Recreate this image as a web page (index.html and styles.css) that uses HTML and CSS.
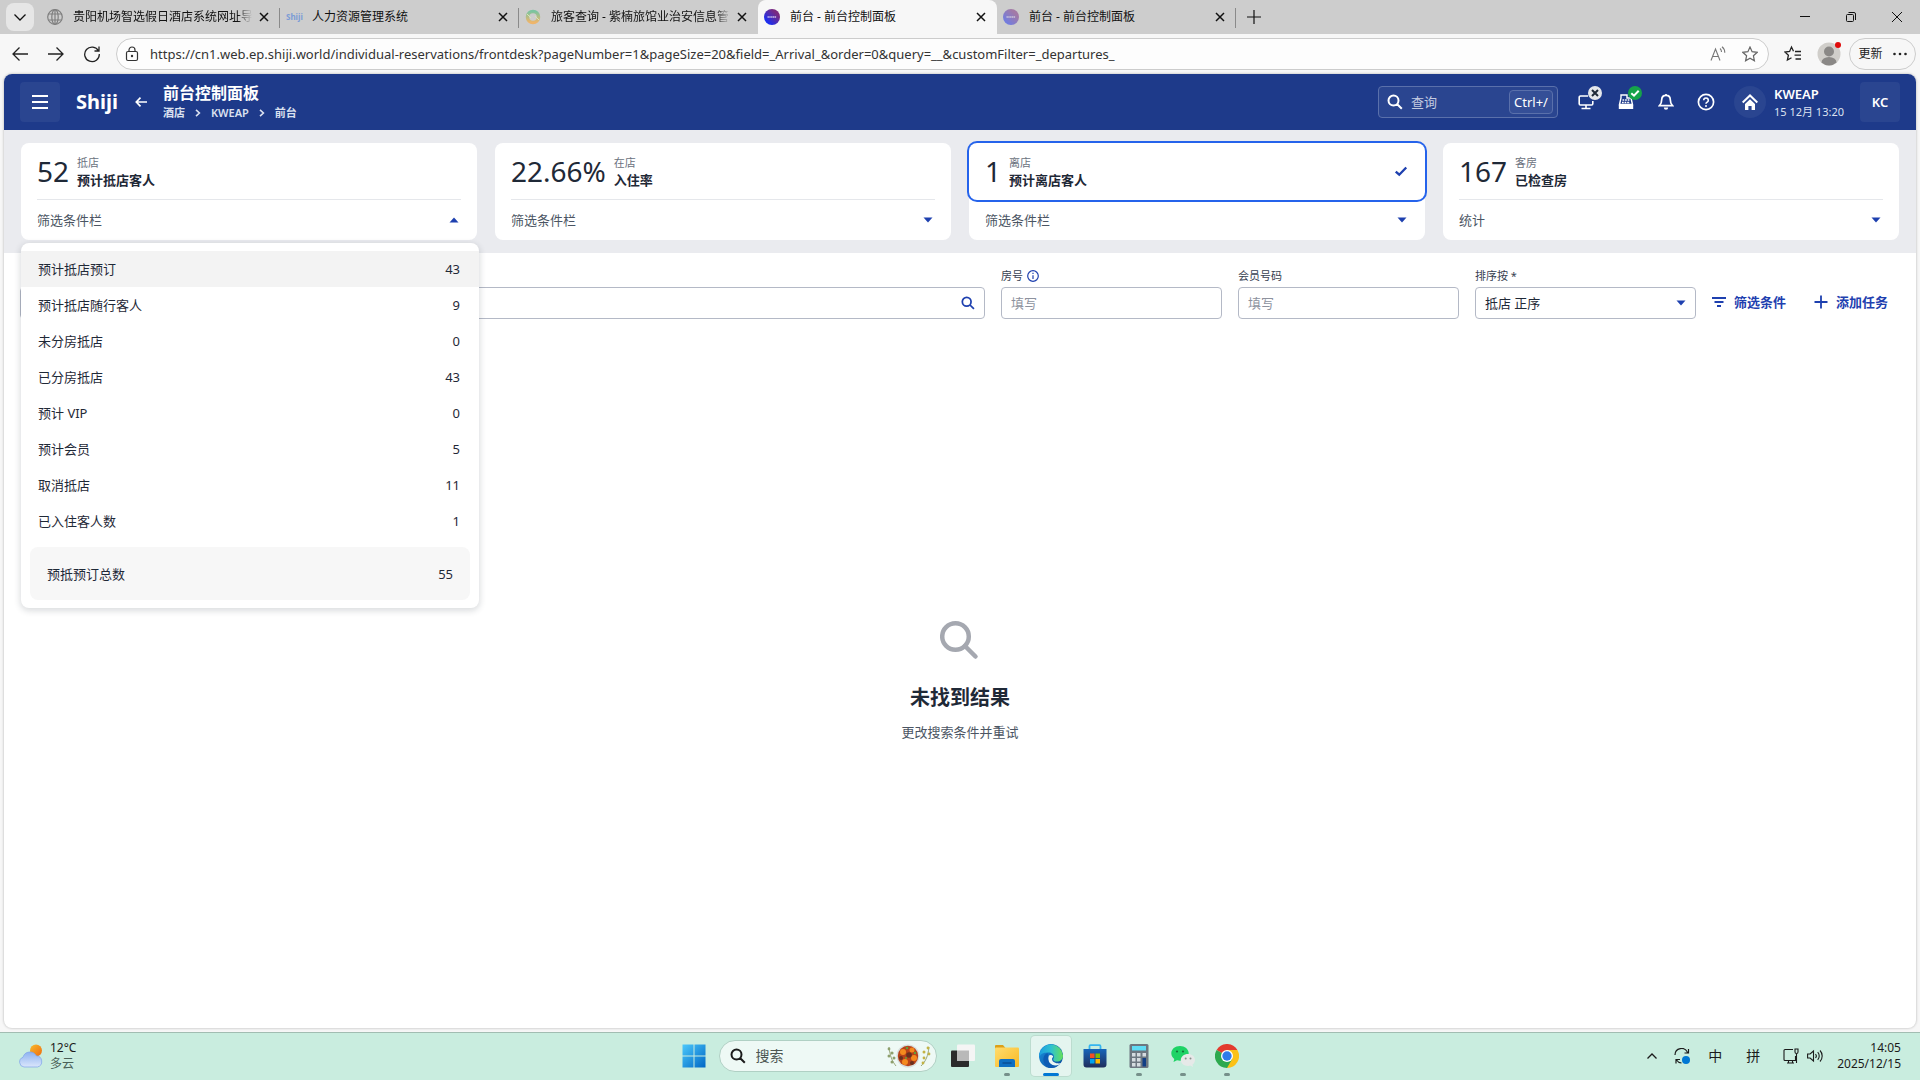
FILE: index.html
```html
<!DOCTYPE html>
<html lang="zh-CN">
<head>
<meta charset="utf-8">
<meta name="viewport" content="width=device-width, initial-scale=1">
<title>前台 - 前台控制面板</title>
<link rel="stylesheet" href="styles.css">
</head>
<body>
<svg class="defs" aria-hidden="true">
  <defs>
    <symbol id="i-x" viewBox="0 0 16 16"><path d="M4 4l8 8M12 4l-8 8" fill="none" stroke="currentColor" stroke-width="1.5"/></symbol>
    <symbol id="i-search" viewBox="0 0 16 16"><path d="M6.5 1.5a5 5 0 1 0 0 10 5 5 0 0 0 0-10zM10 10l4.8 4.8" fill="none" stroke="currentColor" stroke-width="2"/></symbol>
    <symbol id="i-down" viewBox="0 0 10 6"><path d="M0.5 0.5h9L5 5.5z" fill="currentColor"/></symbol>
    <symbol id="i-up" viewBox="0 0 10 6"><path d="M0.5 5.5h9L5 0.5z" fill="currentColor"/></symbol>
    <symbol id="i-sep" viewBox="0 0 6 8"><path d="M1 .8L4.4 4 1 7.2" fill="none" stroke="currentColor" stroke-width="1.6"/></symbol>
    <symbol id="i-shiji" viewBox="0 0 16 16"><circle cx="8" cy="8" r="8" fill="url(#g-shiji)"/><path d="M3.5 8h9" stroke="#fff" stroke-opacity=".7" stroke-width="1.6" stroke-dasharray="1.4 .4"/></symbol>
    <linearGradient id="g-shiji" x1="1" y1="0" x2="0" y2="1"><stop offset=".25" stop-color="#7a2a80"/><stop offset=".8" stop-color="#1b2ef0"/></linearGradient>
    <linearGradient id="g-win" x1="0" y1="0" x2="1" y2="1"><stop offset="0" stop-color="#4cc8fb"/><stop offset="1" stop-color="#0067c5"/></linearGradient>
    <linearGradient id="g-ring" x1="0" y1="0" x2="0" y2="1"><stop offset="0" stop-color="#7cc4a0"/><stop offset="1" stop-color="#efb56a"/></linearGradient>
    <linearGradient id="g-cloud" x1="0" y1="0" x2="0" y2="1"><stop offset="0" stop-color="#8db2f1"/><stop offset="1" stop-color="#dbe6fb"/></linearGradient>
    <linearGradient id="g-sun" x1="0" y1="0" x2="1" y2="1"><stop offset="0" stop-color="#f8bb2c"/><stop offset="1" stop-color="#ee6a10"/></linearGradient>
    <linearGradient id="g-edge-top" x1="0" y1="0" x2="1" y2="0"><stop offset="0" stop-color="#1c9de0"/><stop offset=".5" stop-color="#2fc2cf"/><stop offset="1" stop-color="#66e05a"/></linearGradient>
    <linearGradient id="g-edge" x1="0" y1="0" x2="1" y2="1"><stop offset="0" stop-color="#1a93e0"/><stop offset="1" stop-color="#0a4a9c"/></linearGradient>
    <linearGradient id="g-folder" x1="0" y1="0" x2="1" y2="1"><stop offset="0" stop-color="#ffdc6e"/><stop offset="1" stop-color="#f9b923"/></linearGradient>
    <linearGradient id="g-store" x1="0" y1="0" x2="0" y2="1"><stop offset="0" stop-color="#1766ba"/><stop offset="1" stop-color="#1f2e5c"/></linearGradient>
  </defs>
</svg>

<div class="tabstrip">
  <button class="tab-menu" aria-label="标签页操作"><svg class="s14" viewBox="0 0 14 14"><path d="M1.5 4.5L7 10l5.500-5.500" fill="none" stroke="currentColor" stroke-width="1.3"/></svg></button>
  <div class="tabs">
    <div class="tab">
      <svg class="s16 dim" viewBox="0 0 16 16"><g fill="none" stroke="#333" stroke-width="1.200"><circle cx="8" cy="8" r="7.300"/><ellipse cx="8" cy="8" rx="3.200" ry="7.300"/><path d="M8 .7v14.600M1.500 5h13M1.500 11h13"/></g></svg>
      <button class="tab-title tab-fade">贵阳机场智选假日酒店系统网址导航</button>
      <button class="tab-close" aria-label="关闭"><svg class="s16"><use href="#i-x"/></svg></button>
    </div>
    <div class="tab">
      <span class="tab-word">Shiji</span>
      <button class="tab-title">人力资源管理系统</button>
      <button class="tab-close" aria-label="关闭"><svg class="s16"><use href="#i-x"/></svg></button>
    </div>
    <div class="tab">
      <svg class="s16" viewBox="0 0 16 16"><circle cx="8" cy="8" r="5.500" fill="none" stroke="url(#g-ring)" stroke-width="3.500"/><path d="M2 5l4 4M14 11l-4-4" stroke="#d9e6b8" stroke-width="1"/></svg>
      <button class="tab-title tab-fade">旅客查询 - 紫楠旅馆业治安信息管理</button>
      <button class="tab-close" aria-label="关闭"><svg class="s16"><use href="#i-x"/></svg></button>
    </div>
    <div class="tab tab-active">
      <svg class="s16"><use href="#i-shiji"/></svg>
      <button class="tab-title">前台 - 前台控制面板</button>
      <button class="tab-close" aria-label="关闭"><svg class="s16"><use href="#i-x"/></svg></button>
    </div>
    <div class="tab">
      <svg class="s16 dim"><use href="#i-shiji"/></svg>
      <button class="tab-title">前台 - 前台控制面板</button>
      <button class="tab-close" aria-label="关闭"><svg class="s16"><use href="#i-x"/></svg></button>
    </div>
  </div>
  <button class="tab-new" aria-label="新建标签页"><svg class="s14" viewBox="0 0 14 14"><path d="M7 0v14M0 7h14" stroke="currentColor" stroke-width="1.200"/></svg></button>
  <div class="window-controls">
    <button aria-label="最小化"><svg class="s12" viewBox="0 0 12 12"><path d="M1 5.500h10" stroke="currentColor"/></svg></button>
    <button aria-label="还原"><svg class="s12" viewBox="0 0 12 12"><g fill="none" stroke="currentColor"><rect x="1.500" y="3.500" width="7" height="7" rx="1"/><path d="M3.500 1.500h5.500a1.500 1.500 0 0 1 1.500 1.500v6"/></g></svg></button>
    <button aria-label="关闭窗口"><svg class="s12" viewBox="0 0 12 12"><path d="M1 1l10 10M11 1L1 11" stroke="currentColor"/></svg></button>
  </div>
</div>

<div class="toolbar">
  <button aria-label="后退"><svg class="s18" viewBox="0 0 18 18"><path d="M17 9H2M8.500 2.500L2 9l6.500 6.500" fill="none" stroke="currentColor" stroke-width="1.300"/></svg></button>
  <button aria-label="前进"><svg class="s18" viewBox="0 0 18 18"><path d="M1 9h15M9.500 2.500L16 9l-6.500 6.500" fill="none" stroke="currentColor" stroke-width="1.300"/></svg></button>
  <button aria-label="刷新"><svg class="s18" viewBox="0 0 18 18"><path d="M15.500 6A7.300 7.300 0 1 0 16.300 9M16 1.500V6h-4.500" fill="none" stroke="currentColor" stroke-width="1.300"/></svg></button>
  <div class="address">
    <svg class="s16" viewBox="0 0 16 16"><g fill="none" stroke="#333" stroke-width="1.200"><rect x="2.500" y="5.500" width="11" height="9" rx="1.500"/><path d="M5 5.500V4a3 3 0 0 1 6 0v1.500"/></g><circle cx="8" cy="10" r="1.200" fill="#333"/></svg>
    <input class="url" type="text" aria-label="地址" value="https://cn1.web.ep.shiji.world/individual-reservations/frontdesk?pageNumber=1&amp;pageSize=20&amp;field=_Arrival_&amp;order=0&amp;query=__&amp;customFilter=_departures_">
    <button aria-label="朗读"><svg class="s16" viewBox="0 0 16 16"><g fill="none" stroke="#777" stroke-width="1.100"><path d="M1 14.500L5.500 3 10 14.500M2.600 10.500h5.800M10 2.500c1 .8 1.500 2 1.500 3.500M12 .8c1.800 1.400 2.800 3.400 2.800 6"/></g></svg></button>
    <button aria-label="收藏此页"><svg class="s16" viewBox="0 0 16 16"><path d="M8 1l2.100 4.700 5.100.6-3.800 3.400 1 5.100L8 12.200l-4.400 2.600 1-5.100L.8 6.300l5.100-.6z" fill="none" stroke="#666" stroke-width="1.200"/></svg></button>
  </div>
  <button class="tool" aria-label="收藏夹"><svg class="s18" viewBox="0 0 18 18"><path d="M9.500 6.200L7.500 2 5.600 6.400.9 7l3.500 3.200-1 4.800 4.100-2.300M11 6.500h6M10.500 10.200H17M11.500 14H17" fill="none" stroke="#222" stroke-width="1.300"/></svg></button>
  <button class="avatar" aria-label="个人资料"><svg class="s24" viewBox="0 0 24 24"><circle cx="12" cy="12" r="11.500" fill="#d0ceca"/><circle cx="12" cy="9.500" r="5" fill="#8a8886"/><path d="M4.500 20.500a7.500 5.500 0 0 1 15 0A11.500 11.500 0 0 1 12 23.500a11.500 11.500 0 0 1-7.500-3z" fill="#8a8886"/></svg><span class="avatar-dot"></span></button>
  <button class="update">更新<svg class="s14" viewBox="0 0 14 14"><g fill="currentColor"><circle cx="1.500" cy="7" r="1.300"/><circle cx="7" cy="7" r="1.300"/><circle cx="12.500" cy="7" r="1.300"/></g></svg></button>
</div>

<div class="viewport">
<div class="app">
  <header class="app-header">
    <button class="square" aria-label="菜单"><svg class="s16" viewBox="0 0 16 16"><path d="M0 2h16M0 8h16M0 14h16" stroke="currentColor" stroke-width="2"/></svg></button>
    <a class="logo" href="#">Shiji</a>
    <button class="back" aria-label="返回"><svg class="s12" viewBox="0 0 12 12"><path d="M12 6H1.500M5.500 1.700L1.300 6l4.200 4.300" fill="none" stroke="currentColor" stroke-width="1.700"/></svg></button>
    <div class="heading">
      <h1>前台控制面板</h1>
      <nav class="crumbs"><a href="#">酒店</a><svg class="sep"><use href="#i-sep"/></svg><a href="#">KWEAP</a><svg class="sep"><use href="#i-sep"/></svg><a href="#">前台</a></nav>
    </div>
    <label class="quick"><svg class="s16"><use href="#i-search"/></svg><input type="text" aria-label="查询" placeholder="查询"><kbd>Ctrl+/</kbd></label>
    <div class="header-icons">
      <button aria-label="终端"><svg class="s16" viewBox="0 0 16 16"><g fill="none" stroke="currentColor" stroke-width="1.600"><path d="M10 2H2.500A1.300 1.300 0 0 0 1.200 3.300v6.400A1.300 1.300 0 0 0 2.500 11h11a1.300 1.300 0 0 0 1.300-1.300V7M8 11v3.500M3.500 14.500h9"/></g></svg><span class="badge badge-off"><svg class="s12" viewBox="0 0 12 12"><path d="M3 3l6 6M9 3L3 9" stroke="currentColor" stroke-width="2"/></svg></span></button>
      <button aria-label="收银"><svg class="s16" viewBox="0 0 16 16"><path d="M3 1h6v3h4l1.500 6.500H1.500L3 4z" fill="none" stroke="currentColor" stroke-width="1.400"/><path d="M4.500 6h7M4 8.500h8" stroke="currentColor" stroke-width="1.300" stroke-dasharray="1.700 .9"/><path d="M.8 11h14.400v4H.8z" fill="currentColor"/></svg><span class="badge badge-on"><svg class="s12" viewBox="0 0 12 12"><path d="M2.300 6.200L5 8.700l4.700-5" fill="none" stroke="currentColor" stroke-width="2"/></svg></span></button>
      <button aria-label="通知"><svg class="s16" viewBox="0 0 16 16"><path d="M8 1.300c-2.800 0-4.300 2-4.300 4.500 0 3.200-.9 4.600-2.200 5.900h13c-1.300-1.300-2.200-2.700-2.200-5.900C12.300 3.300 10.800 1.300 8 1.300zM8 0v1.500" fill="none" stroke="currentColor" stroke-width="1.700"/><path d="M5.800 13.500h4.400a2.200 2.200 0 0 1-4.400 0z" fill="currentColor"/></svg></button>
      <button aria-label="帮助"><svg class="s18" viewBox="0 0 18 18"><circle cx="9" cy="9" r="7.600" fill="none" stroke="currentColor" stroke-width="1.700"/><path d="M6.700 7.200a2.300 2.200 0 1 1 3.500 1.900c-.8.500-1.200.8-1.200 1.700" fill="none" stroke="currentColor" stroke-width="1.600"/><circle cx="9" cy="13" r="1" fill="currentColor"/></svg></button>
    </div>
    <div class="property">
      <span class="home"><svg class="s16" viewBox="0 0 16 16"><path d="M.7 8.500L8 1.500l7.300 7" fill="none" stroke="currentColor" stroke-width="2"/><path d="M3 10l5-4.700 5 4.700v6H9.600v-4H6.400v4H3z" fill="currentColor"/></svg></span>
      <div class="property-text"><strong>KWEAP</strong><span>15 12月 13:20</span></div>
    </div>
    <button class="square user">KC</button>
  </header>

  <section class="summary">
    <article class="card">
      <button class="card-head"><span class="figure">52</span><span class="card-text"><small>抵店</small><b>预计抵店客人</b></span></button>
      <button class="card-foot" aria-expanded="true">筛选条件栏<svg class="caret"><use href="#i-up"/></svg></button>
      <div class="panel">
        <ul class="options">
          <li><button class="option option-hover">预计抵店预订<span>43</span></button></li>
          <li><button class="option">预计抵店随行客人<span>9</span></button></li>
          <li><button class="option">未分房抵店<span>0</span></button></li>
          <li><button class="option">已分房抵店<span>43</span></button></li>
          <li><button class="option">预计 VIP<span>0</span></button></li>
          <li><button class="option">预计会员<span>5</span></button></li>
          <li><button class="option">取消抵店<span>11</span></button></li>
          <li><button class="option">已入住客人数<span>1</span></button></li>
        </ul>
        <div class="total">预抵预订总数<span>55</span></div>
      </div>
    </article>
    <article class="card">
      <button class="card-head"><span class="figure">22.66%</span><span class="card-text"><small>在店</small><b>入住率</b></span></button>
      <button class="card-foot">筛选条件栏<svg class="caret"><use href="#i-down"/></svg></button>
    </article>
    <article class="card">
      <button class="card-head card-selected"><span class="figure">1</span><span class="card-text"><small>离店</small><b>预计离店客人</b></span><svg class="check" viewBox="0 0 12 12"><path d="M1.500 6.500L4.500 9.200 10.500 3" fill="none" stroke="currentColor" stroke-width="2"/></svg></button>
      <button class="card-foot">筛选条件栏<svg class="caret"><use href="#i-down"/></svg></button>
    </article>
    <article class="card">
      <button class="card-head"><span class="figure">167</span><span class="card-text"><small>客房</small><b>已检查房</b></span></button>
      <button class="card-foot">统计<svg class="caret"><use href="#i-down"/></svg></button>
    </article>
  </section>

  <form class="filters">
    <div class="field field-wide"><div class="control"><input type="text" aria-label="搜索"><svg class="s14"><use href="#i-search"/></svg></div></div>
    <div class="field"><label for="f-room">房号 <svg class="s12" viewBox="0 0 12 12"><circle cx="6" cy="6" r="5.300" fill="none" stroke="#1e40af" stroke-width="1.200"/><path d="M6 5.200V9M6 2.800v1.300" stroke="#1e40af" stroke-width="1.200"/></svg></label><div class="control"><input id="f-room" type="text" placeholder="填写"></div></div>
    <div class="field"><label for="f-member">会员号码</label><div class="control"><input id="f-member" type="text" placeholder="填写"></div></div>
    <div class="field"><label for="f-sort">排序按 *</label><div class="control"><select id="f-sort"><option>抵店 正序</option></select><svg class="caret"><use href="#i-down"/></svg></div></div>
    <div class="actions">
      <button type="button"><svg class="s14" viewBox="0 0 14 14"><path d="M0 3h14M2.500 7h9M5 11h4" stroke="currentColor" stroke-width="1.800"/></svg>筛选条件</button>
      <button type="button"><svg class="s14" viewBox="0 0 14 14"><path d="M7 .5v13M.5 7h13" stroke="currentColor" stroke-width="1.800"/></svg>添加任务</button>
    </div>
  </form>

  <section class="empty">
    <svg class="empty-icon" viewBox="0 0 40 40"><circle cx="15.500" cy="16.500" r="13.300" fill="none" stroke="currentColor" stroke-width="4.500"/><path d="M25 26l10.500 10.500" stroke="currentColor" stroke-width="4.500" stroke-linecap="round"/></svg>
    <h2>未找到结果</h2>
    <p>更改搜索条件并重试</p>
  </section>
</div>
</div>

<footer class="taskbar">
  <button class="weather"><svg class="s24" viewBox="0 0 24 24"><circle cx="17" cy="6.500" r="6" fill="url(#g-sun)"/><path d="M5 23a5 5 0 0 1-1-9.700 7.200 7.200 0 0 1 13.300-1.500A5.700 5.700 0 0 1 18.500 23z" fill="url(#g-cloud)" stroke="#7da2ea" stroke-width=".7"/></svg><span><span>12°C</span><span class="muted">多云</span></span></button>
  <div class="dock">
    <button aria-label="开始"><svg class="s24" viewBox="0 0 24 24"><path d="M0.500 0.500h11v11h-11zM12.500 .5h11v11h-11zM.5 12.500h11v11h-11zM12.500 12.500h11v11h-11z" fill="url(#g-win)"/></svg></button>
    <label class="dock-search"><svg class="s16"><use href="#i-search"/></svg><input type="text" aria-label="搜索" placeholder="搜索"><svg class="dish" viewBox="0 0 44 24"><path d="M2 3c1 9 3 14 7 19M42 3c-1 9-3 14-8 19" fill="none" stroke="#9aa87c" stroke-width="1"/><g fill="#8ea06d"><circle cx="2" cy="5" r="1.400"/><circle cx="5" cy="9" r="1.600"/><circle cx="2" cy="12" r="1.500"/><circle cx="7" cy="14" r="1.500"/><circle cx="5" cy="18" r="1.500"/></g><g fill="#c3b345"><circle cx="41" cy="4" r="1.400"/><circle cx="37" cy="8" r="1.500"/><circle cx="42" cy="10" r="1.400"/><circle cx="37" cy="14" r="1.400"/><circle cx="36" cy="19" r="1.400"/></g><circle cx="21" cy="12" r="11.500" fill="#d8dfdd"/><circle cx="21" cy="12" r="10.200" fill="#b8431a"/><g fill="#f48a1e"><circle cx="16" cy="8" r="3"/><circle cx="25" cy="6" r="2.500"/><circle cx="27" cy="14" r="3"/><circle cx="18" cy="18" r="3"/></g><g fill="#69301e"><circle cx="22" cy="11" r="2.800"/><circle cx="14" cy="14" r="2"/><circle cx="25" cy="19" r="2"/></g><g fill="#63a03a"><circle cx="20" cy="4" r="1.200"/><circle cx="28" cy="9" r="1.200"/><circle cx="19" cy="14" r="1"/></g></svg></label>
    <button aria-label="任务视图"><svg class="s24" viewBox="0 0 24 24"><rect y="6.500" width="18" height="16.500" rx="1" fill="#2b2b2b"/><rect x="6" y="0.500" width="18" height="16.500" rx="1" fill="#f5f5f5"/><path d="M6 6.500h12V17H6z" fill="#b9b9b9"/></svg></button>
    <button class="running" aria-label="文件资源管理器"><svg class="s24" viewBox="0 0 24 24"><path d="M0 2a1 1 0 0 1 1-1h7l2.500 3v3H0z" fill="#dca019"/><rect y="3.500" width="24" height="19.500" rx="1" fill="url(#g-folder)"/><path d="M4 23v-6a2 2 0 0 1 2-2h12a2 2 0 0 1 2 2v6z" fill="#0f6fc2"/><path d="M7.500 19h9" stroke="#0a4f96" stroke-width="1.500"/></svg></button>
    <button class="running current" aria-label="Edge"><svg class="s24" viewBox="0 0 24 24"><circle cx="12" cy="12" r="12" fill="url(#g-edge)"/><path d="M.3 10A12 12 0 0 1 24 11.500c0 4-3 6-6 6-3 0-4.500-1.500-3.500-3 1.500-3-1-6-5-6C6 8.500 2 9 .3 13z" fill="url(#g-edge-top)"/><path d="M9.500 12c-1.500 5 2 9.500 7 9.500 2.500 0 4.500-1 6-2.500-3 1.200-9.500 0-9.500-4 0-1 .8-1.600 1.200-2.500-1-1.800-3.500-2-4.700-.5z" fill="#eaf6f2"/><path d="M8.500 9C3 11 2.500 20 9.500 23.700c3 .8 7-.2 9-2C13 23 8 18.500 9.500 12.500z" fill="#0d5cb4"/></svg></button>
    <button aria-label="应用商店"><svg class="s24" viewBox="0 0 24 24"><path d="M6.500 6V2.200a1 1 0 0 1 1-1h9a1 1 0 0 1 1 1V6" fill="none" stroke="#35b5f0" stroke-width="1.800"/><path d="M.5 5h23v15.500a3 3 0 0 1-3 3h-17a3 3 0 0 1-3-3z" fill="url(#g-store)"/><path d="M7 9.500h4.500V14H7z" fill="#f25022"/><path d="M12.500 9.500H17V14h-4.500z" fill="#7fba00"/><path d="M7 15h4.500v4.500H7z" fill="#00a4ef"/><path d="M12.500 15H17v4.500h-4.500z" fill="#ffb900"/></svg></button>
    <button class="running" aria-label="计算器"><svg class="s24" viewBox="0 0 24 24"><rect x="2.500" width="19" height="24" rx="1.500" fill="#6d7780"/><path d="M5 2h14v4.500H5z" fill="#5fdcf4"/><g fill="#d6dce0"><path d="M5 9h3.500v3.500H5zM10 9h3.500v3.500H10zM15.500 9H19v3.500h-3.500zM5 14h3.500v3.500H5zM10 14h3.500v3.500H10zM5 19h3.500v3.500H5zM10 19h3.500v3.500H10z"/></g><path d="M15.500 14H19v8.500h-3.500z" fill="#123f85"/></svg></button>
    <button class="running" aria-label="微信"><svg class="s24" viewBox="0 0 24 24"><path d="M9 2C4 2 .3 5.200.3 9.300c0 2.300 1.200 4.300 3 5.600L2.500 18l3.500-1.700c1 .3 2 .4 3 .4 4.800 0 8.700-3.200 8.700-7.400S13.800 2 9 2z" fill="#1fd366"/><path d="M17 10c4 0 7 2.600 7 6 0 1.800-1 3.500-2.500 4.500l.5 2.500-2.700-1.400c-.7.200-1.500.3-2.300.3-4 0-7.200-2.600-7.200-5.900S13 10 17 10z" fill="#e6e9e8"/><g fill="#14713a"><circle cx="6" cy="7.500" r="1.100"/><circle cx="12" cy="7.500" r="1.100"/></g><g fill="#8b8f8d"><circle cx="14.700" cy="14.500" r="1"/><circle cx="19.500" cy="14.500" r="1"/></g></svg></button>
    <button class="running" aria-label="Chrome"><svg class="s24" viewBox="0 0 24 24"><path d="M12 12L1.600 6A12 12 0 0 1 22.400 6z" fill="#e33b2e"/><path d="M12 12V6h10.400A12 12 0 0 1 12 24z" fill="#fbc116"/><path d="M12 12l5.200 3L12 24A12 12 0 0 1 1.600 6z" fill="#2da94f"/><circle cx="12" cy="12" r="6" fill="#fff"/><circle cx="12" cy="12" r="4.700" fill="#2f7bea"/></svg></button>
  </div>
  <div class="tray">
    <button aria-label="显示隐藏的图标"><svg class="s12" viewBox="0 0 12 12"><path d="M1.500 8.500L6 4l4.500 4.500" fill="none" stroke="currentColor" stroke-width="1.300"/></svg></button>
    <button class="sync" aria-label="更新"><svg class="s16" viewBox="0 0 16 16"><path d="M1 7A6.500 6.500 0 0 1 13.500 4.500M14.500 1v4h-4M2 15.500v-4h4M2.500 12c1.300 2 3 2.800 5 3" fill="none" stroke="currentColor" stroke-width="1.200"/><circle cx="12" cy="12" r="4" fill="#0078d4"/></svg></button>
    <button class="ime">中</button>
    <button class="ime">拼</button>
    <button class="net" aria-label="网络和音量"><svg class="s16" viewBox="0 0 16 16"><path d="M10 1.500H2a1 1 0 0 0-1 1v9a1 1 0 0 0 1 1h10.500V8M4 15h7M5.500 12.500V15M9.500 12.500V15M12 1h3v3a1.500 1.500 0 0 1-3 0zM13.500 5.500V15" fill="none" stroke="currentColor" stroke-width="1.100"/></svg><svg class="s16" viewBox="0 0 16 16"><path d="M.6 6v4h2.500L6.500 13V3L3.100 6zM8.500 6a3 3 0 0 1 0 4M10.700 4.200a5.500 5.500 0 0 1 0 7.600M13 2.500a8 8 0 0 1 0 11" fill="none" stroke="currentColor" stroke-width="1.100"/></svg></button>
    <button class="clock"><span>14:05</span><span>2025/12/15</span></button>
  </div>
</footer>
</body>
</html>
```
FILE: styles.css
```css
* { box-sizing: border-box; }

body {
  margin: 0;
  min-height: 100vh;
  display: flex;
  flex-direction: column;
  background: #f7f7f7;
  color: #1f2937;
  font: 13px/20px "Noto Sans", "Noto Sans CJK SC", sans-serif;
}

button, input, select { font: inherit; color: inherit; }
button { margin: 0; padding: 0; border: 0; background: none; display: flex; align-items: center; justify-content: center; }
input, select { min-width: 0; border: 0; padding: 0; margin: 0; background: none; outline: 0; }
a { color: inherit; text-decoration: none; }
h1, h2, p, ul { margin: 0; padding: 0; }
ul { list-style: none; }
svg { display: block; flex: none; }

.defs { position: absolute; width: 0; height: 0; }
.s12 { width: 12px; height: 12px; }
.s14 { width: 14px; height: 14px; }
.s16 { width: 16px; height: 16px; }
.s18 { width: 18px; height: 18px; }
.s24 { width: 24px; height: 24px; }
.dim { opacity: .5; }

/* Tab strip */
.tabstrip {
  display: flex;
  align-items: center;
  height: 34px;
  padding-left: 6px;
  background: #cdcdcd;
  color: #111;
  font-size: 12px;
}
.tab-menu { width: 28px; height: 28px; border-radius: 8px; background: #e6e6e6; margin-right: 7px; }
.tabs { display: flex; height: 34px; flex: 0 1 1195px; min-width: 0; }
.tab {
  flex: 1 1 0;
  min-width: 0;
  display: flex;
  align-items: center;
  gap: 10px;
  padding: 0 8px 1px 6px;
  background: linear-gradient(#8a8a8a, #8a8a8a) right 8px / 1px 20px no-repeat;
}
.tab:has(+ .tab-active) { background: none; }
.tab-active { background: #f7f7f7; border-radius: 8px 8px 0 0; }
.tab-title { flex: 1; min-width: 0; justify-content: flex-start; white-space: nowrap; overflow: hidden; }
.tab-fade { -webkit-mask-image: linear-gradient(90deg, #000 92%, transparent); mask-image: linear-gradient(90deg, #000 92%, transparent); }
.tab-word { width: 16px; color: #7c9cd6; font: bold 8px/16px "Noto Sans", sans-serif; }
.tab-close { margin-left: -6px; }
.tab-new { width: 36px; height: 28px; }
.window-controls { display: flex; margin-left: auto; }
.window-controls button { width: 46px; height: 34px; }

/* Address toolbar */
.toolbar { display: flex; align-items: center; height: 40px; padding: 0 4px 0 2px; color: #222; }
.toolbar > button { width: 36px; height: 36px; }
.address {
  flex: 1;
  display: flex;
  align-items: center;
  gap: 16px;
  height: 32px;
  margin-left: 6px;
  padding: 0 10px 0 7px;
  border: 1px solid #ccc;
  border-radius: 16px;
  background: #fdfdfd;
}
.address > svg { margin-right: -6px; }
.url { flex: 1; color: #333; font: 13px/20px "Noto Sans", sans-serif; }
.toolbar .tool { margin-left: 6px; }
.toolbar .avatar { position: relative; }
.avatar-dot { position: absolute; top: 6px; right: 6px; width: 6px; height: 6px; border-radius: 50%; background: #e00b0b; }
.toolbar .update { width: 67px; height: 32px; gap: 10px; margin-left: 2px; border: 1px solid #ccc; border-radius: 16px; font-size: 12px; }

/* Page */
.viewport { flex: 1; display: flex; padding: 0 4px 4px; }
.app { flex: 1; min-width: 0; display: flex; flex-direction: column; border-radius: 8px; background: #fff; box-shadow: 0 0 2px 1px #d5d5d5; }
.app-header {
  display: flex;
  align-items: center;
  height: 56px;
  padding: 0 16px;
  border-radius: 8px 8px 0 0;
  background: #1e3a8a;
  color: #fff;
}
.square { width: 40px; height: 40px; border-radius: 4px; background: #2a4590; }
.logo { margin-left: 16px; font-size: 20px; line-height: 32px; font-weight: 700; }
.back { width: 16px; height: 16px; margin-left: 15px; }
.heading { margin-left: 14px; padding-top: 1px; }
.heading h1 { font-size: 16px; line-height: 20px; font-weight: 700; }
.crumbs { display: flex; align-items: center; gap: 10px; font-size: 11px; line-height: 20px; font-weight: 600; color: #dbe1f0; }
.sep { width: 6px; height: 8px; }
.quick {
  display: flex;
  align-items: center;
  gap: 8px;
  width: 180px;
  height: 32px;
  margin-left: auto;
  padding: 0 4px 0 8px;
  border: 1px solid #5a70ab;
  border-radius: 4px;
  background: #2a4590;
}
.quick input { flex: 1; }
.quick input::placeholder { color: #c3cbe0; opacity: 1; }
kbd { width: 44px; height: 24px; border: 1px solid #5a70ab; border-radius: 4px; background: #354f97; text-align: center; font: 13px/22px "Noto Sans", sans-serif; }
.header-icons { display: flex; margin-left: 8px; }
.header-icons button { position: relative; width: 40px; height: 40px; }
.badge { position: absolute; top: 4px; right: 4px; width: 14px; height: 14px; border-radius: 50%; display: grid; place-items: center; }
.badge-off { background: #e5e7eb; color: #1f2937; }
.badge-on { background: #16a34a; color: #fff; }
.property { display: flex; align-items: center; gap: 8px; margin-left: 8px; }
.home { display: grid; place-items: center; width: 32px; height: 32px; border-radius: 50%; background: #2a4590; }
.property-text { display: flex; flex-direction: column; padding-top: 2px; line-height: 18px; font-size: 11px; color: #dbe1f0; }
.property-text strong { color: #fff; font-size: 13px; font-weight: 600; }
.user { margin-left: 16px; font-weight: 600; }

/* Summary cards */
.summary { display: grid; grid-template-columns: repeat(4, minmax(0, 1fr)); gap: 18px; padding: 13px 17px; background: #eaebef; }
.card { position: relative; border-radius: 8px; background: #fff; }
.card-head { position: relative; width: 100%; height: 57px; padding: 0 16px; justify-content: flex-start; gap: 8px; border-radius: 8px; text-align: left; }
.card-head::after { content: ""; position: absolute; left: 16px; right: 16px; bottom: 0; height: 1px; background: #e5e7eb; }
.card-selected { box-shadow: 0 0 0 2px #2563eb; }
.card-selected::after { display: none; }
.figure { padding-bottom: 2px; font-size: 28px; line-height: 40px; }
.card-text { display: flex; flex-direction: column; }
.card-text small { font-size: 11px; line-height: 16px; color: #6b7280; }
.card-text b { font-size: 13px; line-height: 18px; font-weight: 700; }
.check { width: 14px; height: 14px; margin: 0 1px 2px auto; color: #1e40af; }
.card-foot { width: 100%; height: 40px; padding: 0 18px 0 16px; justify-content: space-between; color: #4b5563; }
.caret { width: 10px; height: 6px; color: #1e40af; }
.panel {
  position: absolute;
  z-index: 2;
  top: 100%;
  left: 0;
  right: -2px;
  margin-top: 3px;
  padding: 8px 0;
  border-radius: 8px;
  background: #fff;
  box-shadow: 0 2px 6px 1px rgba(31, 41, 55, .16);
}
.option { width: 100%; height: 36px; padding: 0 19px 0 17px; justify-content: space-between; }
.option-hover { background: #f3f3f3; }
.total { display: flex; align-items: center; justify-content: space-between; height: 53px; margin: 8px 9px 0; padding: 0 17px; border-radius: 8px; background: #f7f7f7; }

/* Filters */
.filters { display: flex; align-items: flex-end; gap: 16px; padding: 12px 16px; }
.field { flex: 0 1 221px; min-width: 0; }
.field-wide { flex: 1 1 0; }
.field label { display: flex; align-items: center; gap: 4px; height: 22px; padding-bottom: 1px; font-size: 11px; line-height: 16px; color: #374151; }
.control { display: flex; align-items: center; height: 32px; padding: 0 9px; border: 1px solid #b4b9c6; border-radius: 4px; background: #fff; color: #1e40af; }
.control input, .control select { flex: 1; appearance: none; color: #1f2937; }
.control input::placeholder { color: #8d929e; opacity: 1; }
.actions { display: flex; gap: 28px; padding-right: 12px; }
.actions button { height: 34px; gap: 8px; font-weight: 700; color: #1e40af; }

/* Empty state */
.empty { flex: 1; display: flex; flex-direction: column; align-items: center; padding-top: 289px; }
.empty-icon { width: 40px; height: 40px; color: #a5a8b0; }
.empty h2 { margin-top: 24px; font-size: 20px; line-height: 28px; font-weight: 700; }
.empty p { margin-top: 10px; color: #4b5563; }

/* Taskbar */
.taskbar {
  display: grid;
  grid-template-columns: 1fr auto 1fr;
  align-items: center;
  height: 48px;
  padding-bottom: 2px;
  border-top: 1px solid #a2bdb2;
  background: #c9eddf;
  color: #1b1b1b;
  font-size: 12px;
  line-height: 16px;
}
.weather { justify-self: start; gap: 7px; padding-left: 19px; text-align: left; }
.weather > span, .clock { display: flex; flex-direction: column; }
.muted { color: #4b6158; }
.dock { display: flex; align-items: center; gap: 4px; }
.dock > button { position: relative; width: 40px; height: 40px; border-radius: 4px; }
.dock-search { display: flex; align-items: center; gap: 10px; width: 218px; height: 32px; margin: 0 2px 0 1px; padding: 0 5px 0 10px; border: 1px solid #b0d0c4; border-radius: 16px; background: #eef9f5; font-size: 14px; }
.dock-search input { flex: 1; }
.dock-search input::placeholder { color: #4c5652; opacity: 1; }
.dish { width: 44px; height: 24px; }
.dock .current { background: #e4f5ef; box-shadow: 0 0 0 1px #bcdccf; }
.running::after { content: ""; position: absolute; bottom: 0; left: 50%; width: 6px; height: 3px; margin-left: -3px; border-radius: 2px; background: #76908a; }
.current::after { width: 16px; margin-left: -8px; background: #0078d4; }
.tray { display: flex; align-items: center; justify-self: end; padding-right: 19px; }
.tray button { min-width: 32px; height: 40px; }
.tray .sync { min-width: 28px; }
.tray .ime { min-width: 38px; font-size: 14px; }
.tray .net { gap: 8px; margin: 0 14px 0 11px; }
.tray .clock { align-items: flex-end; min-width: 61px; }
```
